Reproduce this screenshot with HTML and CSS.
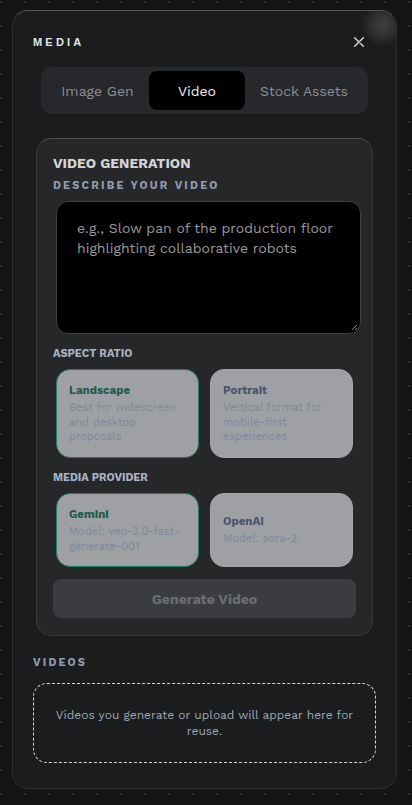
FILE: index.html
```html
<!DOCTYPE html>
<html>
<head>
<meta charset="utf-8">
<link rel="stylesheet" href="styles.css">
</head>
<body>
<div class="panel">
  <div class="glow"></div>
  <div class="header">
    <span class="title">MEDIA</span>
    <svg class="close" width="10" height="10" viewBox="0 0 10 10"><path d="M0.7 0.7L9.3 9.3M9.3 0.7L0.7 9.3" stroke="#d6d8dc" stroke-width="1.4" stroke-linecap="round"/></svg>
  </div>
  <div class="tabs">
    <div class="tab">Image Gen</div>
    <div class="tab active">Video</div>
    <div class="tab">Stock Assets</div>
  </div>
  <div class="card">
    <div class="card-title">VIDEO GENERATION</div>
    <div class="label spaced">DESCRIBE YOUR VIDEO</div>
    <div class="textarea">
      <div class="placeholder">e.g., Slow pan of the production floor highlighting collaborative robots</div>
      <svg class="grip" width="8" height="8" viewBox="0 0 8 8"><path d="M7 2L2 7M7 5L5 7" stroke="#888" stroke-width="1"/></svg>
    </div>
    <div class="label small">ASPECT RATIO</div>
    <div class="options">
      <div class="option selected">
        <div class="opt-title">Landscape</div>
        <div class="opt-desc">Best for widescreen and desktop proposals</div>
      </div>
      <div class="option">
        <div class="opt-title">Portrait</div>
        <div class="opt-desc">Vertical format for mobile-first experiences</div>
      </div>
    </div>
    <div class="label small">MEDIA PROVIDER</div>
    <div class="options providers">
      <div class="option selected">
        <div class="opt-title">Gemini</div>
        <div class="opt-desc">Model: veo-3.0-fast-generate-001</div>
      </div>
      <div class="option">
        <div class="opt-title">OpenAI</div>
        <div class="opt-desc">Model: sora-2</div>
      </div>
    </div>
    <div class="button">Generate Video</div>
  </div>
  <div class="section-label">VIDEOS</div>
  <div class="empty">Videos you generate or upload will appear here for reuse.</div>
</div>
</body>
</html>
```
FILE: styles.css
```css
* { box-sizing: border-box; }
html, body { margin: 0; padding: 0; }
body {
  width: 412px;
  height: 805px;
  overflow: hidden;
  background-color: #151515;
  background-image: radial-gradient(circle, #2d2d2d 1px, transparent 1.2px);
  background-size: 24px 24px;
  background-position: -11px -10px;
  font-family: "Work Sans", "Open Sans", sans-serif;
  padding: 10px 15px 16px 12px;
}
.panel {
  position: relative;
  width: 385px;
  height: 779px;
  background: #1b1c1e;
  border: 1px solid #2c2d2f;
  border-top-color: #545456;
  border-radius: 16px;
  padding: 20px 20px 0 20px;
  overflow: hidden;
}
.glow {
  position: absolute;
  left: 348px;
  top: -8px;
  width: 44px;
  height: 44px;
  border-radius: 50%;
  background: radial-gradient(circle, rgba(255,255,255,0.16) 0%, rgba(255,255,255,0.09) 35%, rgba(255,255,255,0) 70%);
}
.header {
  display: flex;
  align-items: center;
  justify-content: space-between;
  height: 22px;
  padding-right: 12px;
}
.title {
  font-family: "Liberation Sans", Arial, sans-serif;
  font-weight: 700;
  font-size: 11px;
  letter-spacing: 3.2px;
  color: #e3e5ea;
}
.close { display: block; }
.tabs {
  margin: 14px 8px 0 8px;
  height: 47px;
  background: #27282b;
  border-radius: 11px;
  padding: 4px 5px;
  display: grid;
  grid-template-columns: 103px 96px 1fr;
}
.tab {
  display: flex;
  align-items: center;
  justify-content: center;
  font-size: 14px;
  color: #8d8f93;
  border-radius: 8px;
}
.tab.active {
  background: #000;
  color: #f2f2f2;
}
.card {
  margin: 24px 3px 0 3px;
  background: #262729;
  border: 1px solid #38393b;
  border-top-color: #4d4e50;
  border-radius: 15px;
  padding: 14px 16px 17px 16px;
}
.card-title {
  font-size: 14px;
  font-weight: 700;
  color: #d4d5d8;
  line-height: 20px;
}
.label {
  font-weight: 700;
  color: #8f9db2;
}
.label.spaced {
  font-size: 11px;
  letter-spacing: 2.2px;
  line-height: 14px;
  margin-top: 6px;
}
.label.small {
  font-size: 11px;
  color: #a9b3c2;
  line-height: 14px;
  margin-top: 13px;
}
.textarea {
  position: relative;
  margin: 8px 0 0 3px;
  width: 305px;
  height: 133px;
  background: #000;
  border: 1px solid #3e3f41;
  border-radius: 12px;
  padding: 16px 20px;
}
.placeholder {
  font-size: 14px;
  line-height: 20px;
  color: #9a9a9a;
}
.grip {
  position: absolute;
  right: 2px;
  bottom: 2px;
}
.options {
  margin: 8px 3px 0 3px;
  display: grid;
  grid-template-columns: 143px 143px;
  column-gap: 11px;
}
.option {
  background: #9fa0a4;
  border: 1px solid #a3a4a7;
  border-radius: 14px;
  padding: 12px 12px;
  height: 89px;
  display: flex;
  flex-direction: column;
  justify-content: flex-start;
}
.providers .option {
  height: 74px;
  justify-content: center;
}
.option.selected {
  border-color: #1d7a64;
}
.opt-title {
  font-size: 11.5px;
  font-weight: 700;
  color: #485870;
  line-height: 16px;
}
.option.selected .opt-title { color: #1d5c4b; }
.opt-desc {
  font-size: 11px;
  line-height: 14.5px;
  color: #7a899f;
  margin-top: 3px;
}
.button {
  margin-top: 12px;
  height: 39px;
  background: #3a3c3f;
  border-radius: 8px;
  display: flex;
  align-items: center;
  justify-content: center;
  font-size: 14px;
  font-weight: 700;
  color: #6c6e72;
}
.section-label {
  margin-top: 20px;
  font-size: 11px;
  font-weight: 700;
  letter-spacing: 2.2px;
  color: #8f9db2;
  line-height: 14px;
}
.empty {
  margin-top: 13px;
  height: 80px;
  border: 1px dashed #d8d8d8;
  border-radius: 14px;
  display: flex;
  align-items: center;
  justify-content: center;
  text-align: center;
  padding: 0 8px;
  font-size: 12px;
  line-height: 16px;
  color: #9ea8b6;
}
```
